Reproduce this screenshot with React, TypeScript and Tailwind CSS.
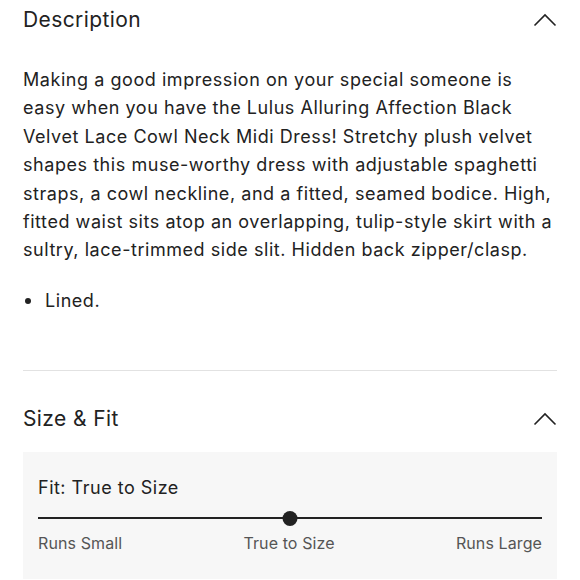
import type { ReactNode } from 'react';

const font = { fontFamily: 'Inter, "Open Sans", sans-serif' };

function ChevronUp() {
  return (
    <svg width="24" height="14" viewBox="0 0 24 14" fill="none" className="shrink-0">
      <path d="M1.5 12.5 L12 2 L22.5 12.5" stroke="#222" strokeWidth="1.6" />
    </svg>
  );
}

function SectionHeader({ title }: { title: string }) {
  return (
    <div className="flex items-center justify-between">
      <h2 className="text-[21px] leading-[28px] tracking-[0.4px] text-[#222]">{title}</h2>
      <ChevronUp />
    </div>
  );
}

function FitLabel({ children }: { children: ReactNode }) {
  return <span className="text-[16px] leading-[20px] tracking-[0.1px] text-[#555]">{children}</span>;
}

export default function App() {
  return (
    <div className="min-h-screen bg-white px-[23px] text-[#222]" style={font}>
      {/* Description section */}
      <section className="pt-[6px]">
        <SectionHeader title="Description" />
        <p className="mt-[32px] text-[18px] leading-[28.4px] tracking-[0.55px] text-[#222]">
          Making a good impression on your special someone is easy when you have the Lulus
          Alluring Affection Black Velvet Lace Cowl Neck Midi Dress! Stretchy plush velvet
          shapes this muse-worthy dress with adjustable spaghetti straps, a cowl neckline, and
          a fitted, seamed bodice. High, fitted waist sits atop an overlapping, tulip-style skirt
          with a sultry, lace-trimmed side slit. Hidden back zipper/clasp.
        </p>
        <ul className="mt-[22px] text-[18px] leading-[28px] tracking-[0.55px]">
          <li className="flex items-center gap-[14px] pl-[2px]">
            <span className="h-[6px] w-[6px] rounded-full bg-[#222]" />
            Lined.
          </li>
        </ul>
      </section>

      <div className="mt-[55px] h-px bg-[#e2e2e2]" />

      {/* Size & Fit section */}
      <section className="pt-[34px]">
        <SectionHeader title="Size & Fit" />
        <div className="mt-[19px] bg-[#f7f7f7] px-[15px] pb-[26px] pt-[24px]">
          <p className="text-[18px] leading-[24px] tracking-[0.5px] text-[#222]">Fit: True to Size</p>
          <div className="relative mt-[11px] flex h-[15px] items-center">
            <div className="h-[2px] w-full bg-[#222]" />
            <span className="absolute left-1/2 top-0 h-[15px] w-[15px] -translate-x-1/2 rounded-full bg-[#222]" />
          </div>
          <div className="mt-[7px] flex justify-between">
            <FitLabel>Runs Small</FitLabel>
            <FitLabel>True to Size</FitLabel>
            <FitLabel>Runs Large</FitLabel>
          </div>
        </div>
      </section>
    </div>
  );
}
